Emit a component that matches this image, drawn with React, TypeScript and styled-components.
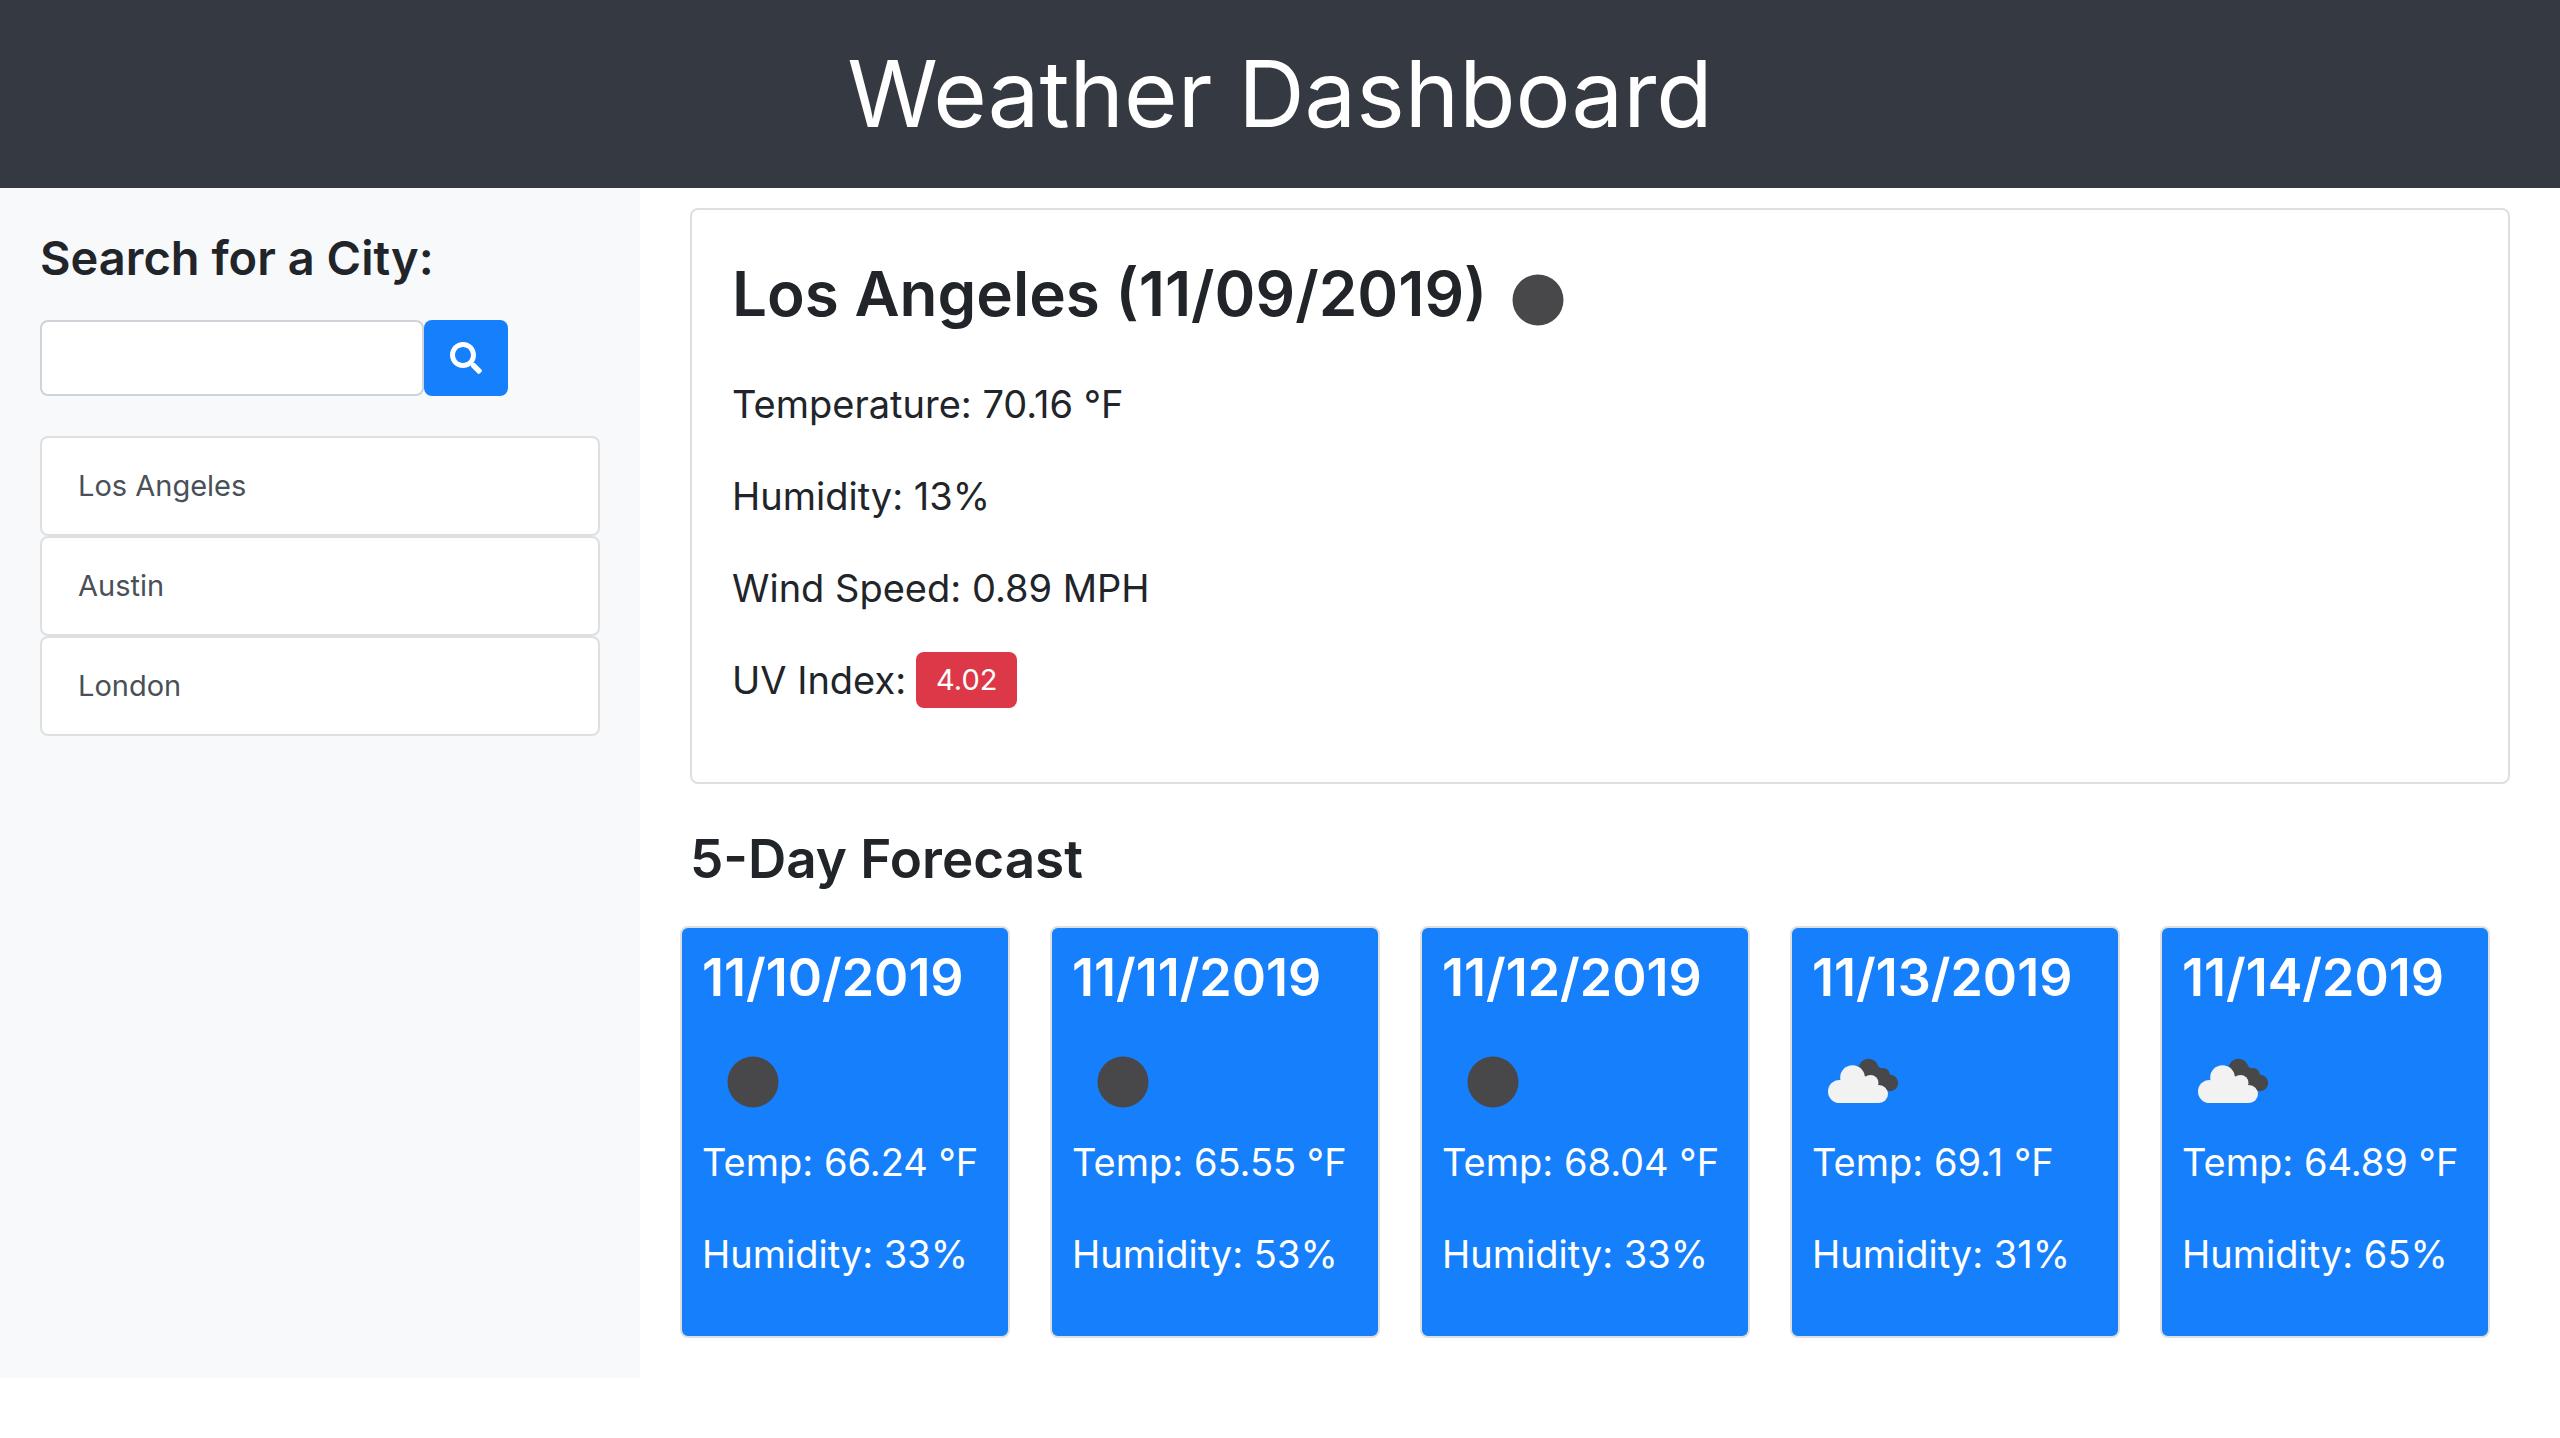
import { useState, type FormEvent } from "react";
import styled, { createGlobalStyle } from "styled-components";
import { FaSearch } from "react-icons/fa";

const color = {
  dark: "#353a42",
  ink: "#212529",
  muted: "#495057",
  primary: "#157ffc",
  danger: "#dc3848",
  side: "#f8f9fb",
  line: "#dfdfdf",
  field: "#ced4da",
};

const GlobalStyle = createGlobalStyle`
  *, *::before, *::after { box-sizing: border-box; }
  body {
    margin: 0;
    background: #fff;
    color: ${color.ink};
    font-family: Inter, "Liberation Sans", sans-serif;
    font-size: 38px;
    line-height: 60px;
  }
  h1, h2, h3, h4, p { margin: 0; }
`;

const Header = styled.header`
  padding: 34px 40px;
  background: ${color.dark};
  color: #fff;
  text-align: center;
`;

const Title = styled.h1`
  font-size: 92px;
  font-weight: 400;
  line-height: 120px;
`;

const Columns = styled.div`
  display: grid;
  grid-template-columns: 1fr 3fr;
`;

const Sidebar = styled.aside`
  padding: 40px;
  background: ${color.side};
`;

const SearchForm = styled.form`
  display: flex;
  flex-wrap: wrap;
`;

const SearchLabel = styled.label`
  flex: 0 0 100%;
  margin-bottom: 32px;
  font-size: 47px;
  font-weight: 600;
`;

const SearchInput = styled.input`
  flex: 0 1 384px;
  min-width: 0;
  height: 76px;
  padding: 12px 24px;
  border: 2px solid ${color.field};
  border-radius: 8px;
  background: #fff;
  color: ${color.muted};
  font: inherit;
  font-size: 32px;
`;

const SearchButton = styled.button`
  display: flex;
  align-items: center;
  justify-content: center;
  width: 84px;
  height: 76px;
  padding: 0;
  border: 0;
  border-radius: 8px;
  background: ${color.primary};
  color: #fff;
  font-size: 32px;
  cursor: pointer;
`;

const CityList = styled.ul`
  margin: 40px 0 0;
  padding: 0;
  list-style: none;
`;

const CityButton = styled.button`
  display: block;
  width: 100%;
  padding: 18px 36px;
  border: 2px solid ${color.line};
  border-radius: 8px;
  background: #fff;
  color: ${color.muted};
  font: inherit;
  font-size: 29px;
  text-align: left;
  cursor: pointer;
`;

const Main = styled.main`
  padding: 20px 0 40px;
`;

const CurrentCard = styled.section`
  margin: 0 50px;
  padding: 40px;
  border: 2px solid ${color.line};
  border-radius: 8px;
`;

const CurrentTitle = styled.h2`
  display: flex;
  align-items: flex-start;
  font-size: 62px;
  font-weight: 600;
  line-height: 88px;
`;

const Details = styled.div`
  display: flex;
  flex-direction: column;
  gap: 32px;
  padding: 24px 0 32px;
`;

const UvLine = styled.p`
  display: flex;
  align-items: center;
  gap: 10px;
`;

const Badge = styled.span`
  padding: 0 20px;
  border-radius: 8px;
  background: ${color.danger};
  color: #fff;
  font-size: 29px;
  line-height: 56px;
`;

const ForecastTitle = styled.h3`
  margin: 40px 50px 32px;
  font-size: 53px;
  font-weight: 600;
  line-height: 70px;
`;

const ForecastRow = styled.div`
  display: grid;
  grid-template-columns: repeat(5, 1fr);
  gap: 40px;
  padding: 0 70px 0 40px;
`;

const DayCard = styled.article`
  padding: 20px 0 52px 20px;
  border: 2px solid ${color.line};
  border-radius: 8px;
  background: ${color.primary};
  color: #fff;
  white-space: nowrap;
`;

const DayTitle = styled.h4`
  margin-bottom: 24px;
  font-size: 52px;
  font-weight: 600;
`;

const DayDetails = styled(Details)`
  padding: 0;
`;

const Glyph = styled.svg`
  display: block;
  width: 100px;
  height: 100px;
  flex: none;
`;

type Sky = "clear" | "broken";

function SkyIcon({ sky }: { sky: Sky }) {
  if (sky === "clear") {
    return (
      <Glyph viewBox="0 0 100 100" role="img" aria-label="Clear sky">
        <circle cx="51" cy="50" r="25.5" fill="#48484a" />
      </Glyph>
    );
  }
  return (
    <Glyph viewBox="0 0 100 100" role="img" aria-label="Broken clouds">
      <g fill="#48484a">
        <circle cx="56.5" cy="36.5" r="9.8" />
        <circle cx="71" cy="43" r="7" />
        <circle cx="78" cy="51" r="8.2" />
        <path d="M52 38 L62 31 L76 42 L80 59 H68 Z" />
      </g>
      <g fill="#f2f2f2">
        <circle cx="27.5" cy="59.5" r="11.5" />
        <circle cx="40.5" cy="45.5" r="12.3" />
        <circle cx="58.5" cy="51" r="8" />
        <circle cx="67" cy="62" r="9" />
        <path d="M27 71 H67 L66 54 L53 44 L29 50 Z" />
      </g>
    </Glyph>
  );
}

const cities = ["Los Angeles", "Austin", "London"];

const forecast: { date: string; sky: Sky; temp: string; humidity: string }[] = [
  { date: "11/10/2019", sky: "clear", temp: "66.24", humidity: "33" },
  { date: "11/11/2019", sky: "clear", temp: "65.55", humidity: "53" },
  { date: "11/12/2019", sky: "clear", temp: "68.04", humidity: "33" },
  { date: "11/13/2019", sky: "broken", temp: "69.1", humidity: "31" },
  { date: "11/14/2019", sky: "broken", temp: "64.89", humidity: "65" },
];

export default function App() {
  const [query, setQuery] = useState("");
  const submit = (event: FormEvent) => event.preventDefault();

  return (
    <>
      <GlobalStyle />
      <Header>
        <Title>Weather Dashboard</Title>
      </Header>
      <Columns>
        <Sidebar>
          <SearchForm onSubmit={submit}>
            <SearchLabel htmlFor="city">Search for a City:</SearchLabel>
            <SearchInput id="city" value={query} onChange={(e) => setQuery(e.target.value)} />
            <SearchButton type="submit" aria-label="Search">
              <FaSearch />
            </SearchButton>
          </SearchForm>
          <CityList>
            {cities.map((city) => (
              <li key={city}>
                <CityButton type="button">{city}</CityButton>
              </li>
            ))}
          </CityList>
        </Sidebar>
        <Main>
          <CurrentCard>
            <CurrentTitle>
              Los Angeles (11/09/2019)
              <SkyIcon sky="clear" />
            </CurrentTitle>
            <Details>
              <p>Temperature: 70.16 °F</p>
              <p>Humidity: 13%</p>
              <p>Wind Speed: 0.89 MPH</p>
              <UvLine>
                UV Index: <Badge>4.02</Badge>
              </UvLine>
            </Details>
          </CurrentCard>
          <ForecastTitle>5-Day Forecast</ForecastTitle>
          <ForecastRow>
            {forecast.map((day) => (
              <DayCard key={day.date}>
                <DayTitle>{day.date}</DayTitle>
                <SkyIcon sky={day.sky} />
                <DayDetails>
                  <p>Temp: {day.temp} °F</p>
                  <p>Humidity: {day.humidity}%</p>
                </DayDetails>
              </DayCard>
            ))}
          </ForecastRow>
        </Main>
      </Columns>
    </>
  );
}
